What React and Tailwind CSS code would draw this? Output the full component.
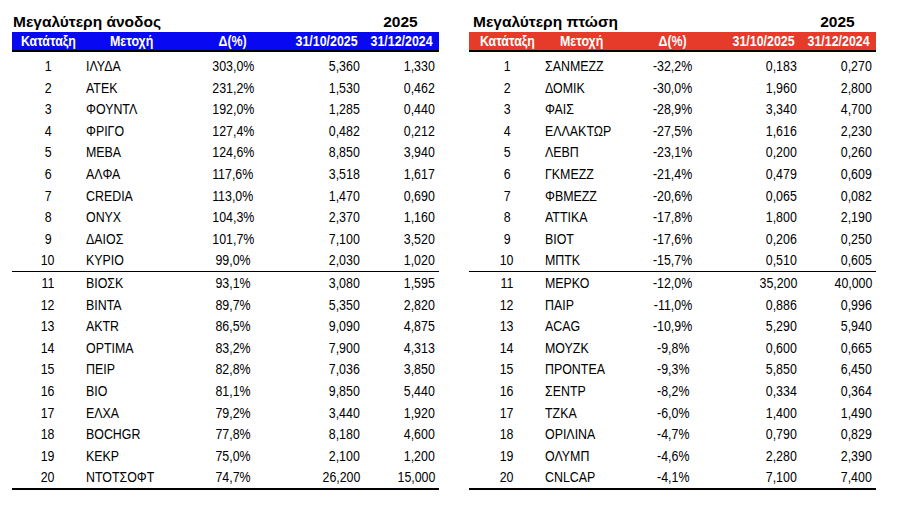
import React from 'react';

const gainers = [
  ['1', 'ΙΛΥΔΑ', '303,0%', '5,360', '1,330'],
  ['2', 'ΑΤΕΚ', '231,2%', '1,530', '0,462'],
  ['3', 'ΦΟΥΝΤΛ', '192,0%', '1,285', '0,440'],
  ['4', 'ΦΡΙΓΟ', '127,4%', '0,482', '0,212'],
  ['5', 'ΜΕΒΑ', '124,6%', '8,850', '3,940'],
  ['6', 'ΑΛΦΑ', '117,6%', '3,518', '1,617'],
  ['7', 'CREDIA', '113,0%', '1,470', '0,690'],
  ['8', 'ΟΝΥΧ', '104,3%', '2,370', '1,160'],
  ['9', 'ΔΑΙΟΣ', '101,7%', '7,100', '3,520'],
  ['10', 'ΚΥΡΙΟ', '99,0%', '2,030', '1,020'],
  ['11', 'ΒΙΟΣΚ', '93,1%', '3,080', '1,595'],
  ['12', 'ΒΙΝΤΑ', '89,7%', '5,350', '2,820'],
  ['13', 'AKTR', '86,5%', '9,090', '4,875'],
  ['14', 'OPTIMA', '83,2%', '7,900', '4,313'],
  ['15', 'ΠΕΙΡ', '82,8%', '7,036', '3,850'],
  ['16', 'ΒΙΟ', '81,1%', '9,850', '5,440'],
  ['17', 'ΕΛΧΑ', '79,2%', '3,440', '1,920'],
  ['18', 'BOCHGR', '77,8%', '8,180', '4,600'],
  ['19', 'ΚΕΚΡ', '75,0%', '2,100', '1,200'],
  ['20', 'ΝΤΟΤΣΟΦΤ', '74,7%', '26,200', '15,000'],
];

const losers = [
  ['1', 'ΣΑΝΜΕΖΖ', '-32,2%', '0,183', '0,270'],
  ['2', 'ΔΟΜΙΚ', '-30,0%', '1,960', '2,800'],
  ['3', 'ΦΑΙΣ', '-28,9%', '3,340', '4,700'],
  ['4', 'ΕΛΛΑΚΤΩΡ', '-27,5%', '1,616', '2,230'],
  ['5', 'ΛΕΒΠ', '-23,1%', '0,200', '0,260'],
  ['6', 'ΓΚΜΕΖΖ', '-21,4%', '0,479', '0,609'],
  ['7', 'ΦΒΜΕΖΖ', '-20,6%', '0,065', '0,082'],
  ['8', 'ΑΤΤΙΚΑ', '-17,8%', '1,800', '2,190'],
  ['9', 'ΒΙΟΤ', '-17,6%', '0,206', '0,250'],
  ['10', 'ΜΠΤΚ', '-15,7%', '0,510', '0,605'],
  ['11', 'ΜΕΡΚΟ', '-12,0%', '35,200', '40,000'],
  ['12', 'ΠΑΙΡ', '-11,0%', '0,886', '0,996'],
  ['13', 'ACAG', '-10,9%', '5,290', '5,940'],
  ['14', 'ΜΟΥΖΚ', '-9,8%', '0,600', '0,665'],
  ['15', 'ΠΡΟΝΤΕΑ', '-9,3%', '5,850', '6,450'],
  ['16', 'ΣΕΝΤΡ', '-8,2%', '0,334', '0,364'],
  ['17', 'ΤΖΚΑ', '-6,0%', '1,400', '1,490'],
  ['18', 'ΟΡΙΛΙΝΑ', '-4,7%', '0,790', '0,829'],
  ['19', 'ΟΛΥΜΠ', '-4,6%', '2,280', '2,390'],
  ['20', 'CNLCAP', '-4,1%', '7,100', '7,400'],
];

// narrow text: no Arial Narrow installed, so squeeze Liberation Sans
const NL = ({ children }) => <span className="inline-block shrink-0 scale-x-[0.8] origin-left">{children}</span>;
const NC = ({ children }) => <span className="inline-block shrink-0 scale-x-[0.8] origin-center">{children}</span>;
const NR = ({ children }) => <span className="inline-block shrink-0 scale-x-[0.8] origin-right">{children}</span>;

const Row = ({ r, grid, namePad }) => (
  <div className={`grid ${grid} h-[21.6px] leading-[21.6px] text-[15.5px] text-black whitespace-nowrap`}>
    <div className="flex justify-center"><NC>{r[0]}</NC></div>
    <div className={`flex ${namePad}`}><NL>{r[1]}</NL></div>
    <div className="flex justify-center"><NC>{r[2]}</NC></div>
    <div className="flex justify-end pr-[2px]"><NR>{r[3]}</NR></div>
    <div className="flex justify-end pr-[4px]"><NR>{r[4]}</NR></div>
  </div>
);

const MoversTable = ({ title, rows, width, grid, headBg, titlePad, headNamePad, namePad }) => (
  <div className={`${width} font-['Liberation_Sans',Arial,sans-serif]`}>
    {/* title line */}
    <div className={`grid ${grid} h-[20px] leading-[20px] text-[15.5px] font-bold text-black whitespace-nowrap`}>
      <div className={`col-span-4 ${titlePad}`}>{title}</div>
      <div className="text-center">2025</div>
    </div>

    {/* header */}
    <div className={`grid ${grid} ${headBg} h-[18px] leading-[18px] text-[15.5px] font-bold text-white border-b-2 border-black box-content whitespace-nowrap`}>
      <div className="flex justify-center"><NC>Κατάταξη</NC></div>
      <div className={`flex ${headNamePad}`}><NL>Μετοχή</NL></div>
      <div className="flex justify-center"><NC>Δ(%)</NC></div>
      <div className="flex justify-end pr-[4px]"><NR>31/10/2025</NR></div>
      <div className="flex justify-end pr-[6px]"><NR>31/12/2024</NR></div>
    </div>

    <div className="pt-[3px]">
      {rows.slice(0, 10).map((r) => (
        <Row key={r[0]} r={r} grid={grid} namePad={namePad} />
      ))}
    </div>
    <div className="border-t border-black">
      {rows.slice(10).map((r) => (
        <Row key={r[0]} r={r} grid={grid} namePad={namePad} />
      ))}
    </div>
    <div className="border-t-2 border-black" />
  </div>
);

export default function App() {
  return (
    <div className="w-[909px] h-[507px] bg-white pt-[12px] pl-[12px] flex gap-[30px]">
      <MoversTable
        title="Μεγαλύτερη άνοδος"
        rows={gainers}
        width="w-[427px]"
        grid="grid-cols-[72px_108px_82px_88px_77px]"
        headBg="bg-[#0808f2]"
        titlePad="pl-px"
        headNamePad="pl-[26px]"
        namePad="pl-[2px]"
      />
      <MoversTable
        title="Μεγαλύτερη πτώση"
        rows={losers}
        width="w-[407px]"
        grid="grid-cols-[76px_85px_86px_83px_77px]"
        headBg="bg-[#e63a2a]"
        titlePad="pl-[4px]"
        headNamePad="pl-[15px]"
        namePad="pl-0"
      />
    </div>
  );
}
